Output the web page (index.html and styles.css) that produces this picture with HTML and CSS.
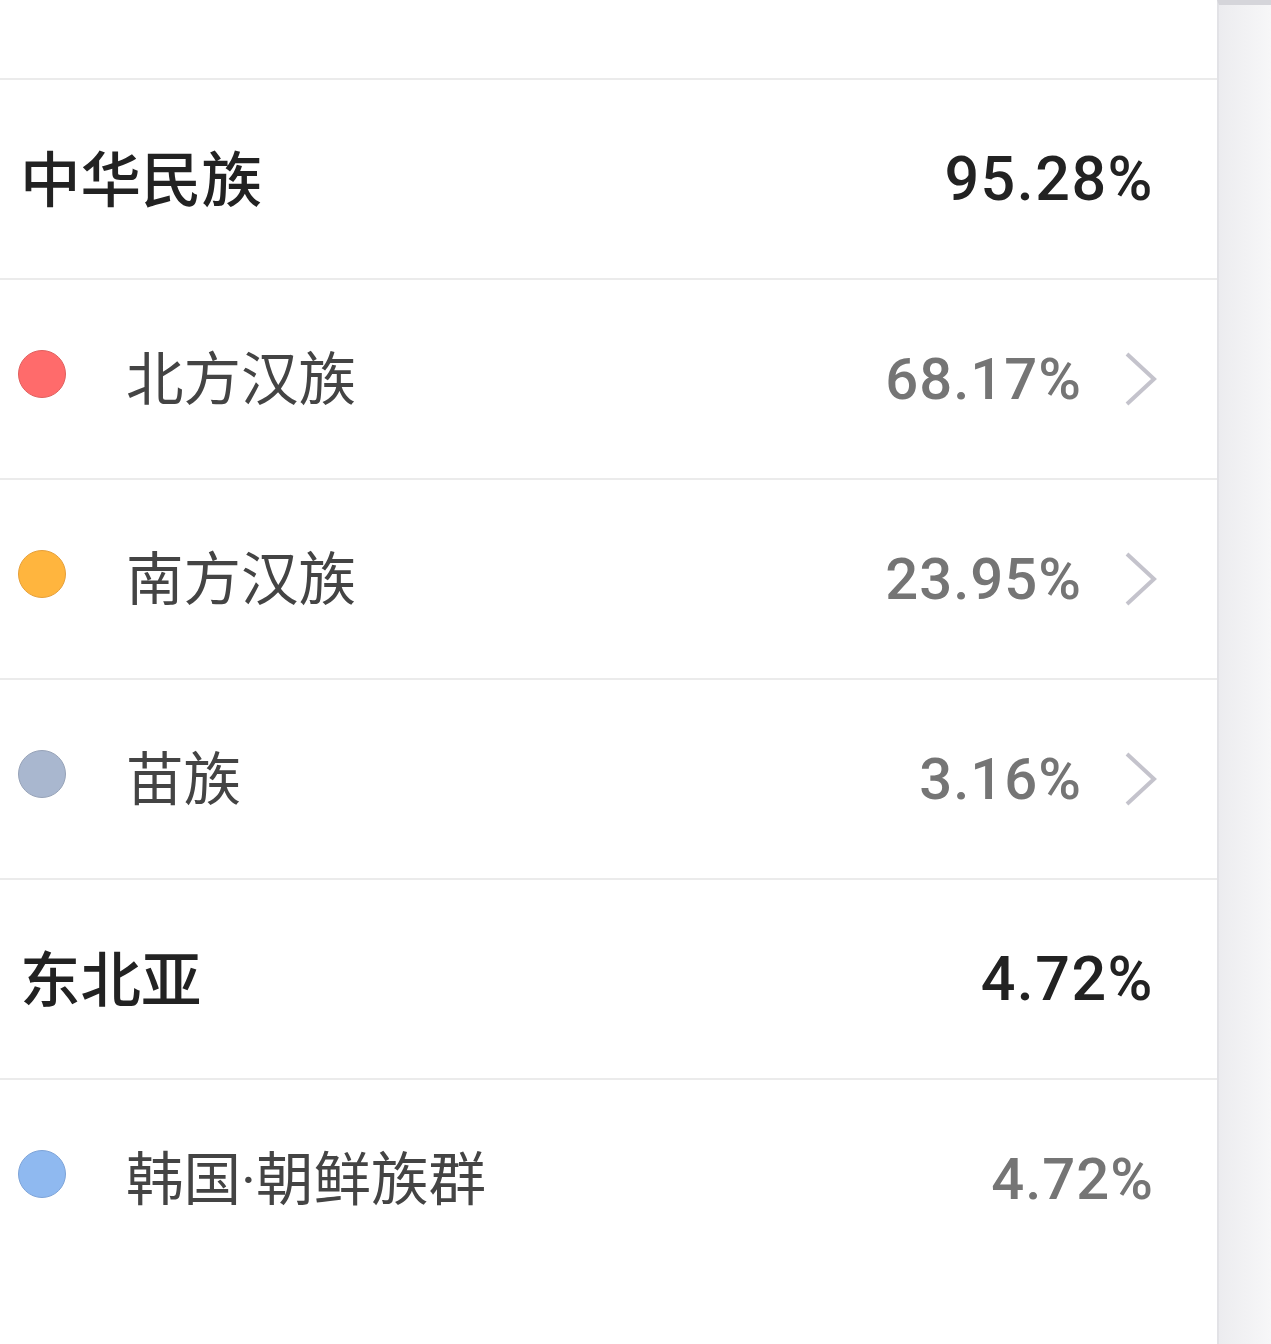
FILE: index.html
```html
<!DOCTYPE html>
<html lang="zh">
<head>
<meta charset="utf-8">
<link rel="stylesheet" href="styles.css">
</head>
<body>
<div class="page">
  <div class="list">
    <div class="spacer"></div>
    <div class="row group">
      <span class="name">中华民族</span>
      <span class="pct">95.28%</span>
    </div>
    <div class="row sub has-chev">
      <span class="dot dot-red"></span>
      <span class="name">北方汉族</span>
      <span class="pct">68.17%</span>
      <svg class="chev" viewBox="0 0 34 54"><path d="M3 2 L30 27 L3 52" fill="none" stroke="#c4c3cc" stroke-width="4"/></svg>
    </div>
    <div class="row sub has-chev">
      <span class="dot dot-orange"></span>
      <span class="name">南方汉族</span>
      <span class="pct">23.95%</span>
      <svg class="chev" viewBox="0 0 34 54"><path d="M3 2 L30 27 L3 52" fill="none" stroke="#c4c3cc" stroke-width="4"/></svg>
    </div>
    <div class="row sub has-chev">
      <span class="dot dot-grey"></span>
      <span class="name">苗族</span>
      <span class="pct">3.16%</span>
      <svg class="chev" viewBox="0 0 34 54"><path d="M3 2 L30 27 L3 52" fill="none" stroke="#c4c3cc" stroke-width="4"/></svg>
    </div>
    <div class="row group">
      <span class="name">东北亚</span>
      <span class="pct">4.72%</span>
    </div>
    <div class="row sub last">
      <span class="dot dot-blue"></span>
      <span class="name">韩国·朝鲜族群</span>
      <span class="pct">4.72%</span>
    </div>
  </div>
  <div class="side"></div>
</div>
</body>
</html>
```
FILE: styles.css
```css
html, body {
  margin: 0;
  padding: 0;
  background: #ffffff;
}
body {
  font-family: Roboto, "Noto Sans CJK SC", sans-serif;
}
.page {
  display: flex;
  width: 1271px;
  height: 1344px;
  overflow: hidden;
}
.list {
  width: 1217px;
  flex: none;
  background: #ffffff;
}
.spacer {
  height: 78px;
  border-bottom: 2px solid #ebebeb;
}
.row {
  height: 198px;
  border-bottom: 2px solid #ebebeb;
  display: flex;
  align-items: center;
  padding-left: 20px;
  padding-right: 63px;
}
.row.last {
  border-bottom: none;
}
.row.has-chev {
  padding-right: 128px;
}
.name {
  flex: 1;
  font-family: Roboto, "Noto Sans CJK SC", sans-serif;
  margin-bottom: 8px;
}
.group .name {
  font-size: 60.5px;
  font-weight: 500;
  color: #222222;
}
.sub .name {
  font-size: 57.5px;
  font-weight: 400;
  color: #444444;
  margin-left: 60px;
}
.pct {
  font-family: Roboto, sans-serif;
  font-weight: 500;
}
.group .pct {
  font-size: 61px;
  letter-spacing: 1.5px;
  color: #222222;
}
.sub .pct {
  font-size: 58px;
  letter-spacing: 1px;
  color: #757575;
}
.chev {
  width: 34px;
  height: 54px;
  margin-left: 42px;
  margin-right: -69px;
  flex: none;
}
.dot {
  width: 46px;
  height: 46px;
  border-radius: 50%;
  flex: none;
  margin-bottom: 10px;
  margin-left: -2px;
}
.dot-red { background: #ff6b6b; border: 1px solid #e0605e; }
.dot-orange { background: #ffb53e; border: 1px solid #e6a03a; }
.dot-grey { background: #a9b7cf; border: 1px solid #97a3b8; }
.dot-blue { background: #8fb9f0; border: 1px solid #7ea4d8; }
.side {
  flex: 1;
  border-left: 2px solid #e2e2e6;
  border-top: 5px solid #d5d5da;
  background: linear-gradient(to right, #ececef, #f7f7f8);
}
```
